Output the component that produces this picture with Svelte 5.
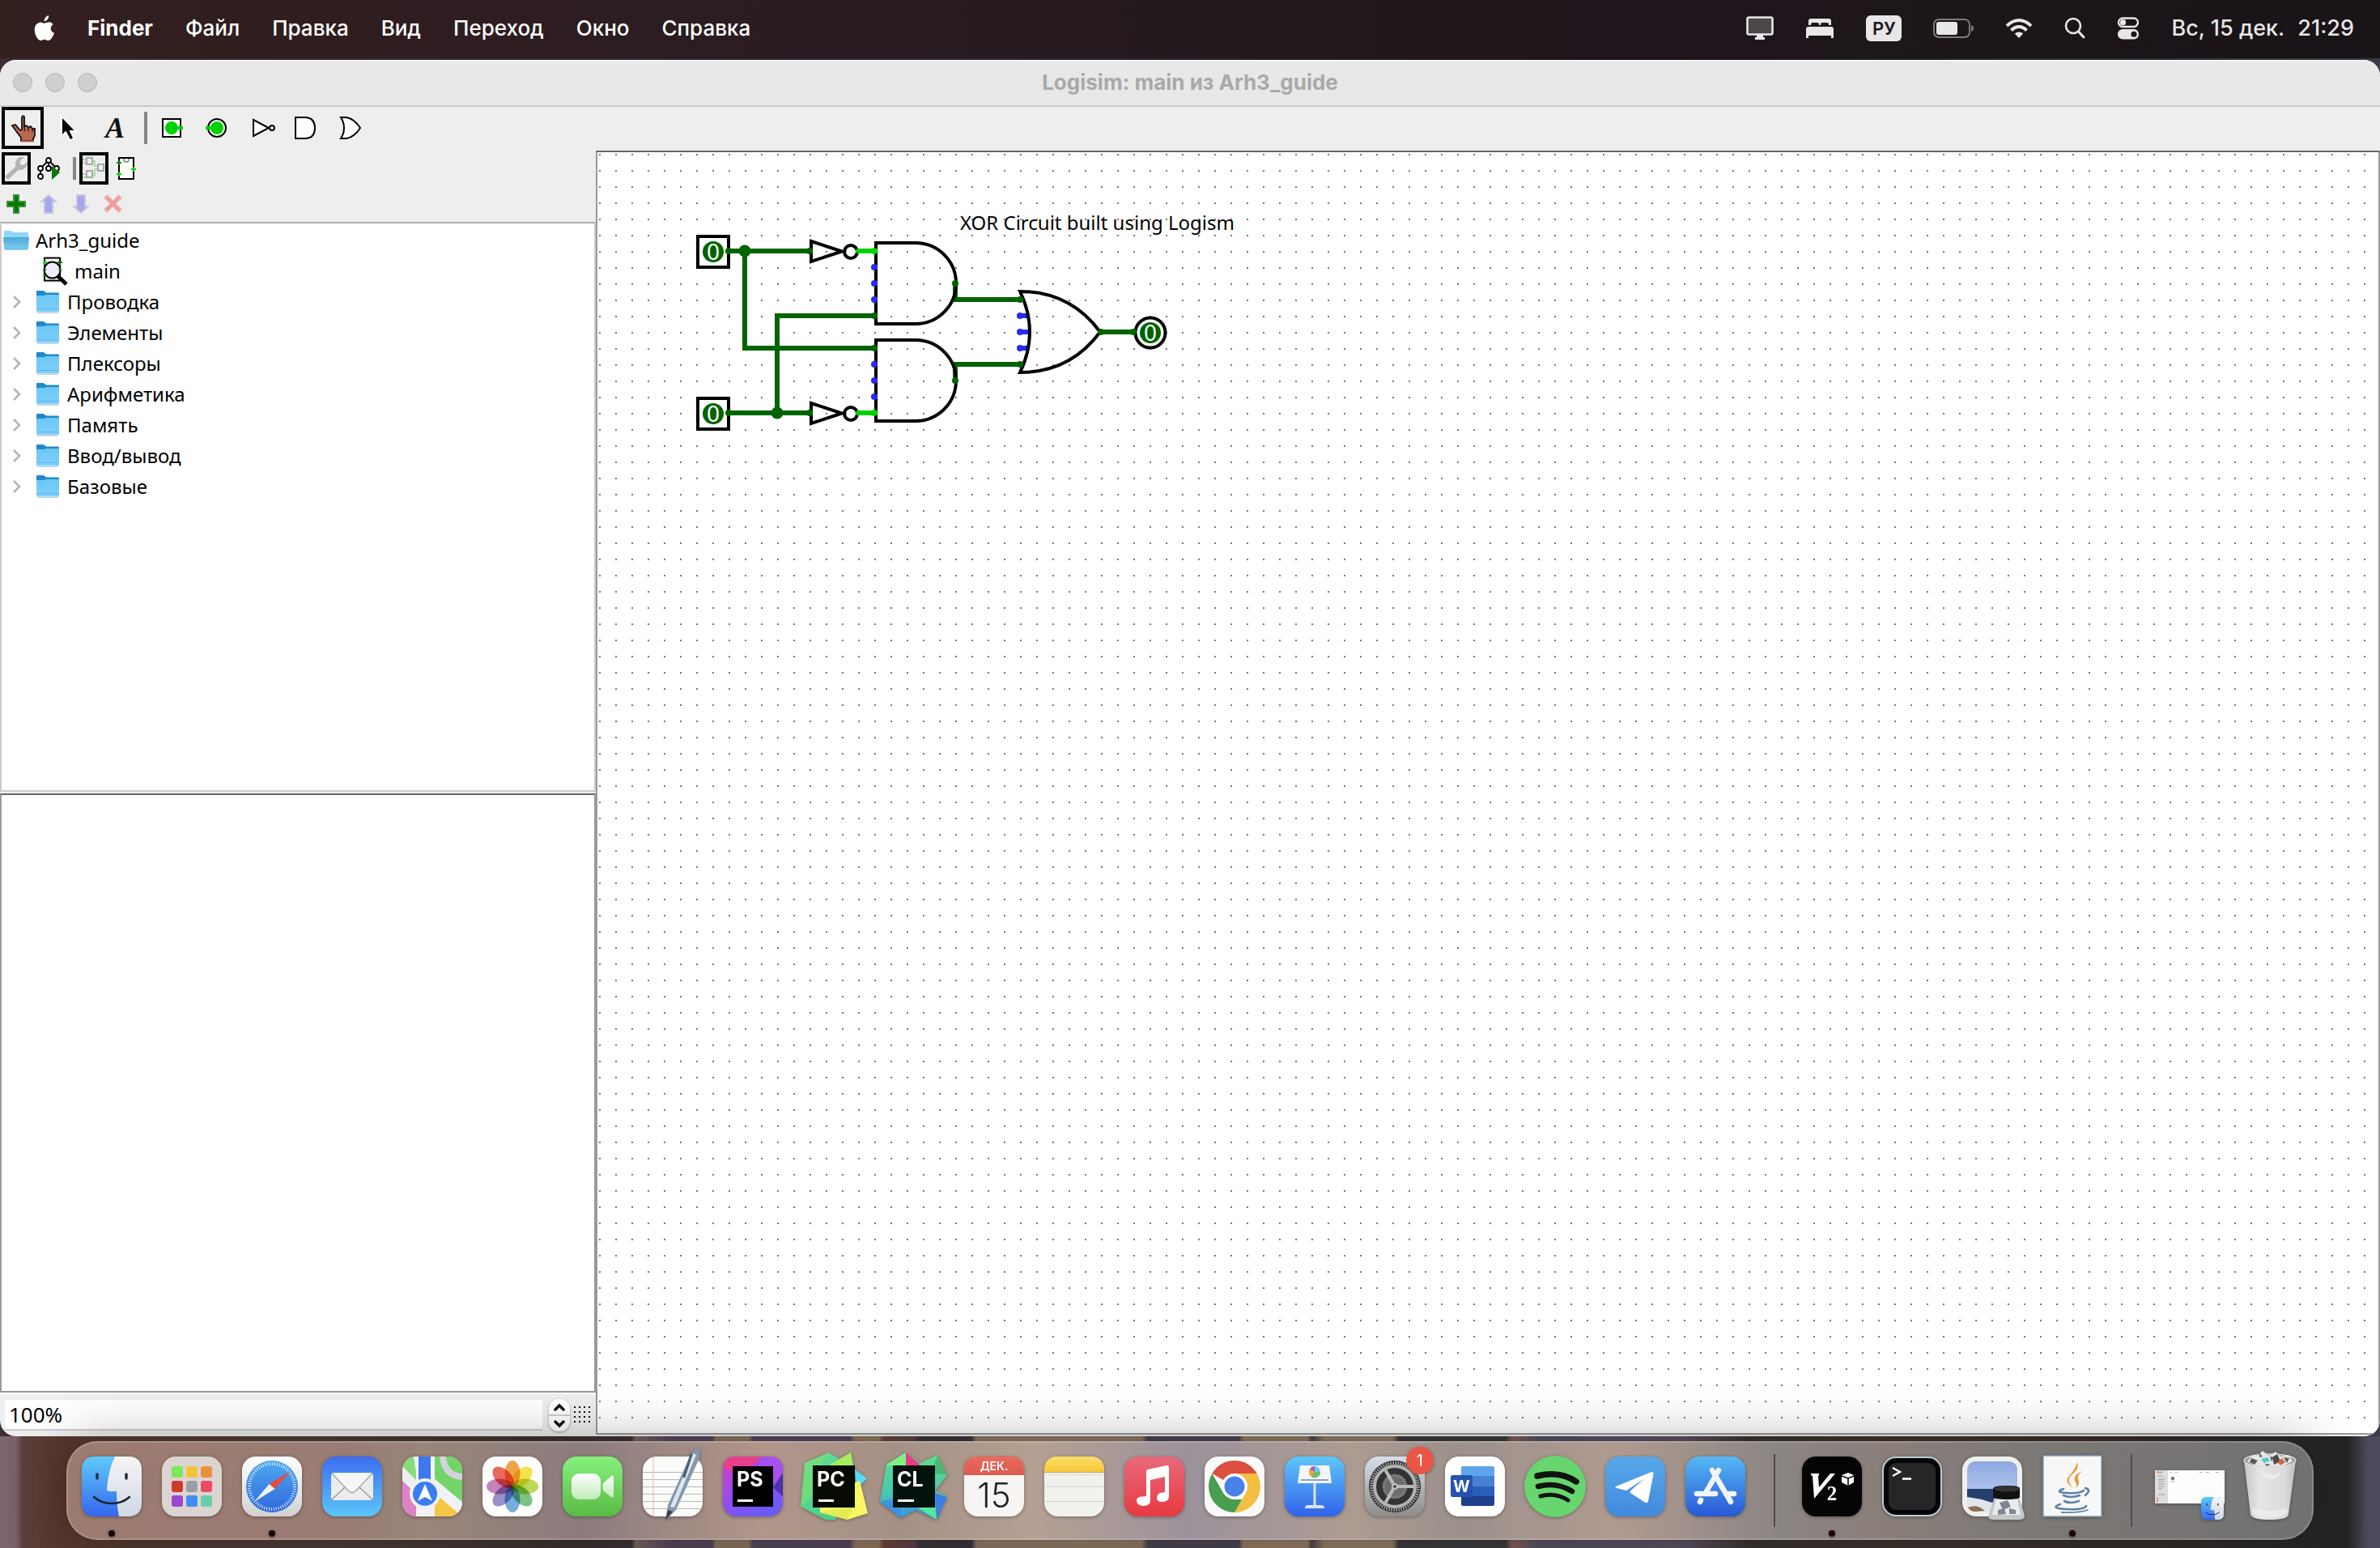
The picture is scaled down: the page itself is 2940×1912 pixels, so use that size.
<script>
  const menus = ['Файл', 'Правка', 'Вид', 'Переход', 'Окно', 'Справка'];
  const libraries = ['Проводка', 'Элементы', 'Плексоры', 'Арифметика', 'Память', 'Ввод/вывод', 'Базовые'];
  const petals = ['#f29a38', '#f4e03a', '#b9d546', '#6fbd7a', '#6aa5dc', '#8d84c4', '#c274b4', '#ea5a4c'];
  const pads = ['#7be85c', '#f5c23c', '#e8913a', '#d23a2c', '#98a0a4', '#ec4a62', '#9a48cf', '#3f8cf4', '#66cfa8'];
  const gates = [300, 420];
  const inputs = [310, 510];
  let zoom = $state('100%');
</script>

{#snippet finderFace()}
  <path d="M17 0H57Q74 0 74 17V57Q74 74 57 74H17Q0 74 0 57V17Q0 0 17 0Z" fill="url(#finder-blue)" />
  <path d="M41 0H57Q74 0 74 17V57Q74 74 57 74H46Q43 60 43 43H34Q31 43 31 40Q33 16 41 0Z" fill="url(#finder-white)" />
  <path d="M19 22V27M55 22V27" stroke="#23303c" stroke-width="3.5" stroke-linecap="round" />
  <path d="M15 50Q24 58 37 58T59 50" fill="none" stroke="#1c2430" stroke-width="2.6" stroke-linecap="round" />
{/snippet}

<div class="screen">
  <svg class="defs" aria-hidden="true">
    <defs>
      <linearGradient id="finder-blue" x2="0" y2="1"><stop stop-color="#5ecbf9" /><stop offset="1" stop-color="#3567ee" /></linearGradient>
      <linearGradient id="finder-white" x2="0" y2="1"><stop stop-color="#f6f4f4" /><stop offset="1" stop-color="#cfd9e4" /></linearGradient>
      <linearGradient id="white-grey" x2="0" y2="1"><stop stop-color="#ffffff" /><stop offset="1" stop-color="#d2d2d2" /></linearGradient>
      <linearGradient id="mail" x2="0" y2="1"><stop stop-color="#3b6df0" /><stop offset="1" stop-color="#5cc6fa" /></linearGradient>
      <linearGradient id="sky" x2="0" y2="1"><stop stop-color="#5fc6fa" /><stop offset="1" stop-color="#3263ea" /></linearGradient>
      <linearGradient id="safari" x2="0" y2="1"><stop stop-color="#4fa9f0" /><stop offset="1" stop-color="#2f68dc" /></linearGradient>
      <linearGradient id="green" x2="0" y2="1"><stop stop-color="#86f07c" /><stop offset="1" stop-color="#59bb45" /></linearGradient>
      <linearGradient id="ps" x2=".6" y2="1"><stop stop-color="#d83ab8" /><stop offset=".5" stop-color="#9a4cf0" /><stop offset="1" stop-color="#6a5af6" /></linearGradient>
      <linearGradient id="pc" x2=".5" y2="1"><stop stop-color="#62dc9a" /><stop offset="1" stop-color="#4ccf8c" /></linearGradient>
      <linearGradient id="cl" x2="0" y2="1"><stop stop-color="#5fe08a" /><stop offset=".6" stop-color="#48c8b0" /><stop offset="1" stop-color="#3c8ce0" /></linearGradient>
      <linearGradient id="cal" x2="0" y2="1"><stop stop-color="#ec6a5e" /><stop offset="1" stop-color="#d95a4e" /></linearGradient>
      <linearGradient id="note" x2="0" y2="1"><stop stop-color="#fbdc6a" /><stop offset="1" stop-color="#f6c836" /></linearGradient>
      <linearGradient id="music" x2="0" y2="1"><stop stop-color="#ea6a7c" /><stop offset="1" stop-color="#e63a40" /></linearGradient>
      <linearGradient id="gear" x2="0" y2="1"><stop stop-color="#d6e0e8" /><stop offset="1" stop-color="#8e8c88" /></linearGradient>
      <linearGradient id="tg" x2="0" y2="1"><stop stop-color="#58a8ea" /><stop offset="1" stop-color="#428adc" /></linearGradient>
      <linearGradient id="store" x2="0" y2="1"><stop stop-color="#56b8f4" /><stop offset="1" stop-color="#2858d6" /></linearGradient>
      <linearGradient id="cam" x2="0" y2="1"><stop stop-color="#ffffff" /><stop offset="1" stop-color="#c2eab8" /></linearGradient>
      <linearGradient id="photo" x2="0" y2="1"><stop stop-color="#8ea8e0" /><stop offset="1" stop-color="#c6d8f6" /></linearGradient>
      <linearGradient id="bin"><stop stop-color="#c6c6c6" /><stop offset=".3" stop-color="#e6e6e6" /><stop offset=".8" stop-color="#dcdada" /><stop offset="1" stop-color="#bdbdbd" /></linearGradient>
      <linearGradient id="folder" x2="0" y2="1"><stop stop-color="#6cc6f4" /><stop offset="1" stop-color="#80d0fc" /></linearGradient>
      <linearGradient id="folder-open" x2="0" y2="1"><stop stop-color="#4fa8d4" /><stop offset="1" stop-color="#82cff4" /></linearGradient>
      <clipPath id="tile"><rect width="74" height="74" rx="17" /></clipPath>
    </defs>
  </svg>

  <header class="menubar">
    <nav class="menus" aria-label="Меню">
      <button class="apple" aria-label="Apple">
        <svg width="26" height="32" viewBox="0 0 26 32"><path d="M18.2 0Q18.5 3 16.5 5.200T12.600 7.300Q12.300 4.600 14.200 2.500T18.200 0ZM23.600 10.900Q20.700 12.800 20.700 16Q20.700 20 25 21.700Q24 25 21.700 28.200T17.800 31Q16.700 31 15.400 30.400T13 29.800Q11.800 29.800 10.500 30.400T8.200 31Q6 31 3.400 27.200T.7 18.400Q.7 13.400 3 11T7.800 8.500Q9.300 8.500 10.900 9.200T13 9.900Q13.600 9.900 15.400 9.100T18.800 8.300Q21.900 8.500 23.600 10.900Z" fill="#fff" /></svg>
      </button>
      <button class="app">Finder</button>
      {#each menus as menu}<button>{menu}</button>{/each}
    </nav>
    <div class="status">
      <button aria-label="Экран"><svg width="34" height="30" viewBox="0 0 34 30"><rect x="1.500" y="1.500" width="31" height="21" rx="2" fill="#4d474c" stroke="#e8e6e7" stroke-width="2.600" /><path d="M13 23H21V26H23V29H11V26H13Z" fill="#e8e6e7" /></svg></button>
      <button aria-label="Сон"><svg width="36" height="26" viewBox="0 0 36 26"><path d="M4 9V4Q4 1 7 1H29Q32 1 32 4V9H29V8Q29 6 27 6H21Q19 6 19 8V9H17V8Q17 6 15 6H9Q7 6 7 8V9ZM1 25V14Q1 11 4 11H32Q35 11 35 14V25H32V22H4V25Z" fill="#e8e6e7" /></svg></button>
      <button class="lang">РУ</button>
      <button aria-label="Батарея"><svg width="50" height="26" viewBox="0 0 50 26"><rect x="1" y="2" width="44" height="22" rx="6" fill="none" stroke="#7f7a7e" stroke-width="2" /><rect x="4" y="5" width="26" height="16" rx="3" fill="#e8e6e7" /><path d="M47 9Q50 10 50 13T47 17Z" fill="#7f7a7e" /></svg></button>
      <button aria-label="Wi-Fi"><svg width="34" height="26" viewBox="0 0 34 26"><g fill="none" stroke="#e8e6e7" stroke-width="4"><path d="M2 10Q9 3 17 3T32 10" /><path d="M7.500 15.500Q12 11 17 11T26.500 15.500" /></g><path d="M17 25L11.800 19.500Q14 17.500 17 17.500T22.200 19.500Z" fill="#e8e6e7" /></svg></button>
      <button aria-label="Поиск"><svg width="26" height="28" viewBox="0 0 26 28"><circle cx="11" cy="11" r="9" fill="none" stroke="#e8e6e7" stroke-width="2.600" /><path d="M17.500 18L24 25" stroke="#e8e6e7" stroke-width="3" stroke-linecap="round" /></svg></button>
      <button aria-label="Пункт управления"><svg width="28" height="28" viewBox="0 0 28 28"><rect x="2" y="1.500" width="24" height="10.500" rx="5.250" fill="none" stroke="#e8e6e7" stroke-width="2.400" /><circle cx="7.500" cy="6.700" r="3.600" fill="#e8e6e7" /><rect x="1" y="15" width="26" height="12.500" rx="6.250" fill="#e8e6e7" /><circle cx="21" cy="21.250" r="3.600" fill="#1b1519" /></svg></button>
      <button class="clock"><span>Вс, 15 дек.</span><span>21:29</span></button>
    </div>
  </header>

  <main class="window">
    <div class="titlebar">
      <div class="lights">
        <button aria-label="Закрыть"></button><button aria-label="Свернуть"></button><button aria-label="Развернуть"></button>
      </div>
      <h1>Logisim: main из Arh3_guide</h1>
      <div class="lights-space"></div>
    </div>

    <div class="toolbar">
      <button class="tool on" aria-label="Нажатие">
        <svg width="40" height="40" viewBox="0 0 20 20"><path d="M9.500 3.500Q10 2 11 3V9L12 8.500L13.500 9.500L15 9L16 10.500L17.500 10.500V14.500L16.500 17V18H9V16L6 12L3.500 8.500L5.500 8L8.500 11.500L9.500 11Z" fill="#b76a50" stroke="#111" stroke-width=".9" /><path d="M13.500 9.500V12M16 10.500V12.500M11.200 9V12" stroke="#3a1c14" stroke-width=".8" /><path d="M9 18.300H17" stroke="#b76a50" stroke-width="1" /></svg>
      </button>
      <button class="tool" aria-label="Выбор">
        <svg width="40" height="40" viewBox="0 0 20 20"><path d="M6 3V15L8.500 12.500L11 17.500L13.500 16.500L11.500 12H14.500Z" fill="#000" stroke="#fff" stroke-width="1.400" /><path d="M6.500 4V14L8.700 11.700L11.500 17L13 16.300L10.700 11.500H13.800Z" fill="#000" /></svg>
      </button>
      <button class="tool" aria-label="Текст">
        <svg width="40" height="40" viewBox="0 0 20 20"><text x="5" y="16" class="serif">A</text></svg>
      </button>
      <span class="sep"></span>
      <button class="tool" aria-label="Входной контакт">
        <svg width="40" height="40" viewBox="0 0 20 20"><rect x="4.500" y="4.500" width="11" height="11" fill="#fff" stroke="#000" /><circle cx="10" cy="10" r="4" fill="#00d200" /><path d="M14 10H17" stroke="#00d200" stroke-width="2" /></svg>
      </button>
      <button class="tool" aria-label="Выходной контакт">
        <svg width="40" height="40" viewBox="0 0 20 20"><circle cx="10" cy="10" r="5.500" fill="#fff" stroke="#000" /><circle cx="10" cy="10" r="4" fill="#00d200" /><path d="M3 10H6" stroke="#00d200" stroke-width="2" /></svg>
      </button>
      <button class="tool" aria-label="НЕ">
        <svg width="40" height="40" viewBox="0 0 20 20"><path d="M4.500 5L14 10L4.500 15Z" fill="#fff" stroke="#000" /><circle cx="16" cy="10" r="1.500" fill="#ddd" stroke="#000" stroke-width=".9" /></svg>
      </button>
      <button class="tool" aria-label="И">
        <svg width="40" height="40" viewBox="0 0 20 20"><path d="M2.500 3.500H9Q14.500 4 14.500 10T9 16.500H2.500Z" fill="#fff" stroke="#000" /></svg>
      </button>
      <button class="tool" aria-label="ИЛИ">
        <svg width="40" height="40" viewBox="0 0 20 20"><path d="M2.500 3.500H6Q11 4.500 14.500 10Q11 15.500 6 16.500H2.500Q4.500 13.500 4.500 10T2.500 3.500Z" fill="#fff" stroke="#000" /></svg>
      </button>
    </div>

    <div class="body">
      <aside class="side">
        <div class="tools">
          <button class="mini on" aria-label="Инструменты"><svg width="28" height="28" viewBox="0 0 14 14"><path d="M1 13L8 6.500" stroke="#b4b4b4" stroke-width="2.600" /><path d="M12 0H9Q6.500 1.500 6.500 4.500Q6.500 8 9.500 8Q13 8 14 4V3L11.500 5L9.500 4.500V2.500Z" fill="#b4b4b4" /></svg></button>
          <button class="mini" aria-label="Моделирование"><svg width="28" height="28" viewBox="0 0 14 14"><g fill="#fff" stroke="#000" stroke-width=".9"><path d="M7 2L2 7V12M7 2V7M7 2L12 7" /><circle cx="7" cy="2" r="1.500" /><circle cx="2" cy="7" r="1.500" /><circle cx="7" cy="7" r="1.500" /><circle cx="12" cy="7" r="1.500" /><circle cx="2" cy="12" r="1.500" /></g><path d="M9 5.500L14 9.500L9 14Z" fill="#0a7a0a" /></svg></button>
          <span class="sep small"></span>
          <button class="mini on" aria-label="Схема"><svg width="28" height="28" viewBox="0 0 14 14"><g fill="none"><path d="M0 1.500H2.500M0 3.500H2.500M0 10.500H2.500M0 12.500H2.500M6 2.500H7.500V5.500H9.500M6 11.500H7.500V7.500H9.500M13 6.500H14" stroke="#9fe09f" stroke-width=".9" /><g stroke="#a8a8a8"><rect x="2.500" y=".5" width="3.500" height="4" /><rect x="9.500" y="4.500" width="3.500" height="4" /><rect x="2.500" y="8.500" width="3.500" height="4" /></g></g></svg></button>
          <button class="mini" aria-label="Внешний вид"><svg width="28" height="28" viewBox="0 0 14 14"><rect x="2.500" y=".5" width="9" height="13" fill="#fff" stroke="#000" /><path d="M5.500 1V2Q5.500 3 7 3T8.500 2V1" fill="none" stroke="#999" /><path d="M1 3.500H4M2.500 2.300V4.700" stroke="#0a7a0a" /><path d="M1 10.500H4M2.500 9.300V11.700M10 7.500H13M11.500 6.300V8.700" stroke="#00d200" /></svg></button>
        </div>
        <div class="tools actions">
          <button class="mini" aria-label="Добавить"><svg width="24" height="24" viewBox="0 0 12 12"><path d="M4.500 .5H7.500V4.500H11.500V7.500H7.500V11.500H4.500V7.500H.5V4.500H4.500Z" fill="#007a00" stroke="#3f8f3f" /></svg></button>
          <button class="mini" aria-label="Вверх"><svg width="24" height="24" viewBox="0 0 12 12"><path d="M6 .5L10.300 4.500H8.500V11.500H3.500V4.500H1.700Z" fill="#a6a6ec" stroke="#c6c6de" /></svg></button>
          <button class="mini" aria-label="Вниз"><svg width="24" height="24" viewBox="0 0 12 12"><path d="M6 11.500L10.300 7.500H8.500V.5H3.500V7.500H1.700Z" fill="#a6a6ec" stroke="#c6c6de" /></svg></button>
          <button class="mini" aria-label="Удалить"><svg width="24" height="24" viewBox="0 0 12 12"><path d="M1 1L10.500 10.500M10.500 1L1 10.500" stroke="#ecccce" stroke-width="3.400" /><path d="M1.500 1.500L10 10M10 1.500L1.500 10" stroke="#ee9c9e" stroke-width="2.200" /></svg></button>
        </div>
        <ul class="tree">
          <li>
            <button class="node root">
              <svg width="32" height="26" viewBox="0 0 32 26"><path d="M1 9V2Q1 1 2 1H9Q11 1 12 3H30Q31 3 31 4V9Z" fill="#8fd6f8" /><path d="M0 9H32L31 23Q31 25 29 25H3Q1 25 1 23Z" fill="url(#folder-open)" /><path d="M1 22.500H31" stroke="#6ab8e0" stroke-width="1" /></svg>
              <span>Arh3_guide</span>
            </button>
          </li>
          <li>
            <button class="node circuit">
              <svg width="34" height="36" viewBox="0 0 17 18"><rect x="2" y=".8" width="9.500" height="14" fill="#fff" stroke="#000" /><path d="M1 3.500H3.500M2.200 2.500V5M1 11.500H3.500" stroke="#00d200" /><path d="M10 3.500H13M11.500 2.500V5" stroke="#006400" /><circle cx="6.800" cy="8.300" r="5" fill="#eeeefb" stroke="#000" /><path d="M2 8H3.200M10.500 8H12.500" stroke="#00b000" stroke-width=".8" /><path d="M10.200 12L15.500 17" stroke="#000" stroke-width="2.400" /></svg>
              <span>main</span>
            </button>
          </li>
          {#each libraries as library}
            <li>
              <button class="node library">
                <svg width="12" height="18" viewBox="0 0 12 18"><path d="M2 2L9 9L2 16" fill="none" stroke="#b5b5b5" stroke-width="2.600" /></svg>
                <svg width="30" height="30" viewBox="0 0 30 30"><path d="M1 26V2Q1 1 2 1H9Q11 1 13 3.500H28Q29 3.500 29 5V26Z" fill="#2089cc" /><path d="M1 26V8Q1 7 3 7H11L13 6H29V26Q29 27.500 27.500 27.500H2.500Q1 27.500 1 26Z" fill="url(#folder)" /><path d="M1 23.500H29" stroke="#5fb4e6" /><path d="M2 28.500H28" stroke="#000" stroke-opacity=".2" /></svg>
                <span>{library}</span>
              </button>
            </li>
          {/each}
        </ul>
        <section class="properties" aria-label="Свойства"></section>
        <div class="zoombar">
          <input aria-label="Масштаб" bind:value={zoom} />
          <div class="spinner">
            <button aria-label="Увеличить"><svg width="14" height="10" viewBox="0 0 14 10"><path d="M2 8L7 3L12 8" fill="none" stroke="#111" stroke-width="3.500" stroke-linecap="round" /></svg></button>
            <button aria-label="Уменьшить"><svg width="14" height="10" viewBox="0 0 14 10"><path d="M2 2L7 7L12 2" fill="none" stroke="#111" stroke-width="3.500" stroke-linecap="round" /></svg></button>
          </div>
          <button class="grip" aria-label="Сетка"></button>
        </div>
      </aside>

      <section class="canvas" aria-label="Схема main">
        <svg width="900" height="400" viewBox="738 188 900 400">
          <text x="1186" y="284" class="label">XOR Circuit built using Logism</text>
          <g fill="none" stroke="#006400" stroke-width="6">
            <path d="M900 310H1000M920 310V430H1080M900 510H1000M960 510V390H1080" />
            <path d="M1180 350V370H1262M1180 470V450H1262M1360 410H1400" />
          </g>
          <path d="M1260 390H1269M1260 410H1271M1260 430H1269" stroke="#2828ff" stroke-width="6" />
          {#each inputs as y}
            <rect x="862" y={y - 18} width="38" height="38" fill="#fff" stroke="#000" stroke-width="4" />
            <circle cx="881" cy={y + 1} r="13" fill="#006400" />
            <text x="881" y={y + 11} class="bit">0</text>
            <path d="M1002 {y - 12}L1040 {y + .5}L1002 {y + 13}Z" fill="none" stroke="#000" stroke-width="4" />
            <circle cx="1051" cy={y + 1} r="8" fill="none" stroke="#000" stroke-width="4" />
            <path d="M1060 {y}H1080" stroke="#00d200" stroke-width="6" stroke-linecap="round" />
            <g fill="#006400"><circle cx="900" cy={y} r="4" /><circle cx="1000" cy={y} r="4" /></g>
          {/each}
          {#each gates as y}
            <path d="M1131 {y}H1082V{y + 100}H1131A50 50 0 0 0 1131 {y}Z" fill="none" stroke="#000" stroke-width="4" />
            <circle cx="1180" cy={y + 50} r="4" fill="#006400" />
            <g fill="#2828ff"><circle cx="1080" cy={y + 30} r="4" /><circle cx="1080" cy={y + 50} r="4" /><circle cx="1080" cy={y + 70} r="4" /></g>
          {/each}
          <path d="M1260 360Q1322 360 1359 410Q1322 460 1260 460Q1284 410 1260 360Z" fill="none" stroke="#000" stroke-width="4" />
          <g fill="#00d200"><circle cx="1080" cy="310" r="4" /><circle cx="1080" cy="510" r="4" /></g>
          <g fill="#006400">
            <circle cx="920" cy="310" r="7.500" /><circle cx="960" cy="510" r="7.500" />
            <circle cx="1080" cy="390" r="4" /><circle cx="1080" cy="430" r="4" />
            <circle cx="1260" cy="370" r="4" /><circle cx="1260" cy="450" r="4" />
          </g>
          <g fill="#2828ff"><circle cx="1260" cy="390" r="4" /><circle cx="1260" cy="410" r="4" /><circle cx="1260" cy="430" r="4" /></g>
          <circle cx="1421" cy="411" r="18.500" fill="#fff" stroke="#000" stroke-width="4" />
          <circle cx="1421" cy="411" r="13" fill="#006400" />
          <text x="1421" y="421" class="bit">0</text>
          <g fill="#006400"><circle cx="1360" cy="410" r="4" /><circle cx="1400" cy="410" r="4" /></g>
        </svg>
      </section>
    </div>
  </main>

  <footer class="desk">
    <nav class="dock" aria-label="Dock">
      <div class="apps grow">
        <button class="open" aria-label="Finder"><svg viewBox="0 0 74 74">{@render finderFace()}</svg></button>
        <button aria-label="Launchpad"><svg viewBox="0 0 74 74"><rect width="74" height="74" rx="17" fill="#dcd4d1" />{#each pads as pad, i}<rect x={12 + (i % 3) * 18} y={12 + Math.floor(i / 3) * 18} width="14" height="14" rx="3" fill={pad} />{/each}</svg></button>
        <button class="open" aria-label="Safari"><svg viewBox="0 0 74 74"><rect width="74" height="74" rx="17" fill="url(#white-grey)" /><circle cx="37" cy="37" r="32" fill="url(#safari)" /><circle cx="37" cy="37" r="28" fill="none" stroke="#fff" stroke-opacity=".85" stroke-width="4" stroke-dasharray="1 1.930" /><path d="M60 18L40.500 40L33.500 34Z" fill="#e8483c" /><path d="M15 56L40.500 40L33.500 34Z" fill="#f2f2f2" /></svg></button>
        <button aria-label="Почта"><svg viewBox="0 0 74 74"><rect width="74" height="74" rx="17" fill="url(#mail)" /><rect x="11" y="20" width="52" height="34" rx="4" fill="#ececec" /><path d="M12 53L28 38M62 53L46 38" stroke="#9a9a9a" stroke-width="1.400" /><path d="M12 21L32 42Q37 47 42 42L62 21" fill="#f6f6f6" stroke="#a8a8a8" stroke-width="1.400" /></svg></button>
        <button aria-label="Карты"><svg viewBox="0 0 74 74"><g clip-path="url(#tile)"><rect width="74" height="74" fill="#eceef0" /><path d="M0 0H17V29L0 12Z" fill="#86de78" /><path d="M39 0H74V56L39 27Z" fill="#74d468" /><path d="M0 30L17 46V74H0Z" fill="#df82c8" /><path d="M40 44L74 74H40Z" fill="#f4c843" /><path d="M50 0Q52 24 74 25" fill="none" stroke="#d2d3dc" stroke-width="8" /><path d="M14 0H40V28L74 58V74L40 45V74H17V20Z" fill="#f1f2f5" /><path d="M20 0H35V34H20Z" fill="#3b78ee" /></g><circle cx="28" cy="46" r="17" fill="#3a7cf2" stroke="#eef0f4" stroke-width="4" /><path d="M28 34L37 55L28 50L19 55Z" fill="#fff" /></svg></button>
        <button aria-label="Фото"><svg viewBox="0 0 74 74"><rect width="74" height="74" rx="17" fill="#fdfdfd" />{#each petals as petal, i}<ellipse class="petal" cx="37" cy="21" rx="9.500" ry="16" fill={petal} transform="rotate({i * 45} 37 37)" />{/each}</svg></button>
        <button aria-label="FaceTime"><svg viewBox="0 0 74 74"><rect width="74" height="74" rx="17" fill="url(#green)" /><rect x="11" y="21" width="36" height="32" rx="9" fill="url(#cam)" /><path d="M50 33L60 24Q63 22 63 26V48Q63 52 60 50L50 42Q49 37 50 33Z" fill="url(#cam)" /></svg></button>
        <button aria-label="TextEdit"><svg viewBox="0 0 74 74"><rect width="74" height="74" rx="17" fill="#fbfbfa" /><path d="M0 19.500H74M0 28.500H74M0 37.500H74M0 46.500H74M0 55.500H74M1 64.500H73" stroke="#b8b8b8" /><path d="M13 1V73" stroke="#f0b4ac" /><path d="M28 79L31 60L60 -4L66 -10L71 -8L70 2L41 66Z" fill="#8497aa" /><path d="M34 62L62 -4L66 -2L39 63Z" fill="#dbe6f0" /><path d="M49 25L59 -4L62 -3L52 27Z" fill="#4f6274" /><path d="M28 79L31 66L37 68Z" fill="#3c3c3e" /></svg></button>
        <button aria-label="PhpStorm"><svg viewBox="0 0 74 74"><rect width="74" height="74" rx="17" fill="url(#ps)" /><path d="M17 0H47L24 22L0 13Q2 0 17 0Z" fill="#e83f8c" /><path d="M47 0H57Q74 0 74 17V56L62 30L44 12Z" fill="#a850ee" /><path d="M74 20V50L62 38Z" fill="#4a34a8" /><rect x="12" y="12" width="50" height="50" /><text x="17" y="37" class="jb">PS</text><rect x="18" y="53" width="19" height="3" fill="#fff" /></svg></button>
        <button aria-label="PyCharm"><svg viewBox="0 0 74 74"><path d="M2 8L32 -5L46 4L59 -5L64 22L40 78L28 78L-3 62Z" fill="url(#pc)" /><path d="M2 8L32 -5L22 12L10 50L-3 62Z" fill="#7ee070" fill-opacity=".6" /><path d="M59 -5L64 22L30 12Z" fill="#a9ec60" /><path d="M64 16L79 27L66 40Z" fill="#56dcf8" /><path d="M70 30L80 70L55 78L21 69V50Z" fill="#f7f764" /><path d="M21 69L55 78L62 62Z" fill="#e4ec54" /><rect x="12" y="11" width="52" height="52" fill="#060a02" /><text x="17" y="37" class="jb">PC</text><rect x="19" y="53" width="19" height="3" fill="#fff" /></svg></button>
        <button aria-label="CLion"><svg viewBox="0 0 74 74"><path d="M4 10L28 -5L46 8L67 -2L79 23L64 42L79 50L66 78L40 66L22 76L-4 56Z" fill="url(#cl)" /><path d="M28 -5L46 10L28 14Z" fill="#e83a86" /><path d="M4 10L28 -5V14Z" fill="#7cf286" /><path d="M67 -2L79 23L60 20Z" fill="#4cb874" /><path d="M64 45L79 50L66 78Z" fill="#3a80e4" /><path d="M-4 56L20 50L22 76Z" fill="#3a92e0" /><path d="M38 60L66 78L64 60Z" fill="#56e89c" /><rect x="12" y="11" width="52" height="52" fill="#04120c" /><text x="17" y="37" class="jb">CL</text><rect x="18" y="53" width="20" height="3" fill="#fff" /></svg></button>
        <button aria-label="Календарь"><svg viewBox="0 0 74 74"><rect width="74" height="74" rx="17" fill="#f6f5f4" /><path d="M0 23V17Q0 0 17 0H57Q74 0 74 17V23Z" fill="url(#cal)" /><text x="37" y="17" class="month">ДЕК.</text><text x="37" y="63" class="day">15</text></svg></button>
        <button aria-label="Заметки"><svg viewBox="0 0 74 74"><rect width="74" height="74" rx="17" fill="#f1f1ee" /><path d="M0 19V17Q0 0 17 0H57Q74 0 74 17V19Z" fill="url(#note)" /><path d="M0 19.500H74" stroke="#b9a878" /><path d="M2 22.500H72" stroke="#aaa" stroke-dasharray="1 2" /><path d="M0 37H74M0 55.500H74" stroke="#d0d0ce" /></svg></button>
        <button aria-label="Музыка"><svg viewBox="0 0 74 74"><rect width="74" height="74" rx="17" fill="url(#music)" /><path d="M27 18Q27 16 29 16L52 11Q55 11 55 14V49Q55 56 47 56T40 50T50 44V25L32 29V54Q32 61 24 61T15 55T27 49Z" fill="#fff" /></svg></button>
        <button aria-label="Chrome"><svg viewBox="0 0 74 74"><rect width="74" height="74" rx="17" fill="#fafafa" /><path d="M37 37L9.300 21A32 32 0 0 1 64.700 21Z" fill="#dc4f40" /><path d="M37 21H64.700A32 32 0 0 1 37 69L50.800 45Z" fill="#f3be42" /><path d="M9.300 21L23.200 45L37 53H46.200L37 69A32 32 0 0 1 9.300 21Z" fill="#4a9c4e" /><circle cx="37" cy="37" r="16" fill="#fff" /><circle cx="37" cy="37" r="12.500" fill="#4a80ea" /></svg></button>
        <button aria-label="Keynote"><svg viewBox="0 0 74 74"><rect width="74" height="74" rx="17" fill="url(#sky)" /><path d="M19 11H55L58 33H16Z" fill="#f3f5f8" /><path d="M20 29H54" stroke="#8ea4bc" stroke-width="2" /><circle cx="37" cy="19" r="7" fill="#6cc8f2" /><path d="M37 19V12A7 7 0 0 0 31 16Z" fill="#a85cc0" /><path d="M37 19L31 15.500A7 7 0 0 0 33 25Z" fill="#f0a040" /><path d="M37 19L33 25A7 7 0 0 0 44 19Z" fill="#6cc060" /><path d="M37 33V60" stroke="#dde4ee" stroke-width="3" /><path d="M25 64Q25 60 29 60H45Q49 60 49 64Z" fill="#dbe2ea" /></svg></button>
        <button aria-label="Системные настройки"><svg viewBox="0 0 74 74"><rect width="74" height="74" rx="17" fill="url(#gear)" /><circle cx="37" cy="37" r="32" fill="#252525" /><circle cx="37" cy="37" r="29" fill="none" stroke="#a6a6a6" stroke-width="4" stroke-dasharray="1.600 1.440" /><circle cx="37" cy="37" r="25" fill="#333" stroke="#b2b4b4" stroke-width="4" /><circle cx="37" cy="37" r="14" fill="#6c6e6e" stroke="#8c8e8e" stroke-width="3" stroke-dasharray="1.600 1" /><path d="M37 37H60M37 37L25.500 17M37 37L25.500 57" stroke="#babcbc" stroke-width="4" /><circle cx="37" cy="37" r="4" fill="#babcbc" /><circle cx="37" cy="37" r="1.600" fill="#222" /></svg><span class="badge">1</span></button>
        <button aria-label="Word"><svg viewBox="0 0 74 74"><rect width="74" height="74" rx="17" fill="#fff" /><path d="M20 24V14Q20 12 22 12H59Q61 12 61 14V24Z" fill="#5fa5ea" /><path d="M20 24H61V37H20Z" fill="#4880d4" /><path d="M20 37H61V49H20Z" fill="#2c5cbc" /><path d="M20 49H61V59Q61 61 59 61H22Q20 61 20 59Z" fill="#1f3f8c" /><rect x="7" y="23" width="27" height="27" rx="2.500" fill="#2552b0" /><text x="20.500" y="44" class="word">W</text></svg></button>
        <button aria-label="Spotify"><svg viewBox="0 0 74 74"><circle cx="37" cy="37" r="38" fill="#67d66f" /><g fill="none" stroke="#101410" stroke-linecap="round"><path d="M15 24Q43 17 63 31" stroke-width="7.500" /><path d="M16 37Q39 31 58 43" stroke-width="6.500" /><path d="M19 49Q37 44 53 54" stroke-width="5" /></g></svg></button>
        <button aria-label="Telegram"><svg viewBox="0 0 74 74"><rect width="74" height="74" rx="17" fill="url(#tg)" /><path d="M13 37L56 19.500Q60 18 59.500 22L53 55Q52 59 48 56L31 45Q30 43.500 32 41.500L49 27L26 42L14 39Q11 38 13 37Z" fill="#fff" /></svg></button>
        <button aria-label="App Store"><svg viewBox="0 0 74 74"><rect width="74" height="74" rx="17" fill="url(#store)" /><g stroke="#f2f4fa" stroke-width="6.500" stroke-linecap="round"><path d="M41 17L26 43M33 17L56 56M14 46H37M50 46H60M19 54L18 56" /></g></svg></button>
      </div>
      <span class="rule"></span>
      <div class="apps">
        <button class="open" aria-label="V2"><svg viewBox="0 0 74 74"><rect width="74" height="74" rx="17" fill="#050505" /><path d="M11 21H21V23L20 24L21 38L35 21H41L15 52L13 24L11 23Z" fill="#fff" /><text x="37" y="54" class="two">2</text><path d="M57 20L64 23V32L57 36L49 32V23Z" fill="#fff" /><path d="M49 24L57 27L64 24M57 27V36" fill="none" stroke="#050505" stroke-width="1.600" /></svg></button>
        <button aria-label="Терминал"><svg viewBox="0 0 74 74"><rect width="74" height="74" rx="17" fill="#bccdd3" /><rect x="2" y="2" width="70" height="70" rx="15" fill="#050505" /><rect x="8" y="8" width="58" height="58" rx="9" fill="#262626" /><path d="M13 14L22 19L13 24" fill="none" stroke="#fff" stroke-width="2.400" /><path d="M25 27.500H36" stroke="#fff" stroke-width="2.600" /></svg></button>
        <button aria-label="Просмотр"><svg viewBox="0 0 74 74"><rect width="74" height="74" rx="17" fill="#f0efee" /><rect x="6" y="6" width="62" height="62" rx="10" fill="url(#photo)" /><path d="M6 40H68V58H6Z" fill="#25406e" /><path d="M6 50L24 53L40 58V68H16Q6 68 6 58Z" fill="#dfe6ee" /><path d="M7 63Q18 58 28 67L16 68Q10 68 7 63Z" fill="#8c7050" /><path d="M40 50H70L77 73Q77 78 70 78H39Q32 78 32 73Z" fill="#c3c7c9" /><path d="M42 52H68L72 72H37Z" fill="#e9ecee" /><path d="M46 57L56 54L60 62L50 66ZM44 66L52 64L54 71L44 72ZM58 64L66 66L66 71H58Z" fill="#808692" /><path d="M38 40Q38 36 55 36T71 40V50Q71 53 55 53T38 50Z" fill="#111" /><ellipse cx="55" cy="40" rx="16" ry="3.500" fill="#333" /></svg></button>
        <button class="open" aria-label="Java"><svg viewBox="0 0 74 74"><rect x="1" y="-1" width="72" height="75" fill="#f7f7f7" stroke="#7f9cba" stroke-width="1.400" /><path d="M43 7Q46 15 37 22T38 39Q26 31 33 24T43 7Z" fill="#e89a34" /><path d="M49 18Q36 24 41 32Q44 36 40 40Q48 33 44 29Q42 24 49 18Z" fill="#e89a34" /><g fill="none" stroke="#5c82a6" stroke-width="2.600" stroke-linecap="round"><path d="M26 40Q14 44 30 45T51 42" /><path d="M53 39Q61 41 53 48" /><path d="M26 48Q34 52 46 48" /><path d="M27 55Q34 59 45 55" /><path d="M22 59Q8 64 30 65T54 61" /><path d="M24 69Q44 70 56 66" stroke-width="1.800" /></g></svg></button>
      </div>
      <span class="rule"></span>
      <div class="apps kept">
        <button class="mini-window" aria-label="Окно Finder"><svg viewBox="0 0 88 74"><rect x="1" y="17" width="86" height="41" rx="1" fill="#fdfdfd" /><path d="M1 17H17V58H1Z" fill="#dedcdc" /><path d="M4 19.500H5.500" stroke="#e8584c" stroke-width="2" /><path d="M6 19.500H7.500" stroke="#ecb43c" stroke-width="2" /><path d="M8 19.500H9.500" stroke="#58b84c" stroke-width="2" /><path d="M5 24H10M5 28H13M5 31H12M5 34H13M5 37H12M5 40H10M5 47H13" stroke="#9a9a9e" stroke-width="1.200" /><path d="M3 52H5M3 55H5" stroke="#e05a50" stroke-width="1.500" /><path d="M20 19.500H22M26 19.500H29M56 19.500H60M64 19.500H68M76 19.500H80M84 19.500H85" stroke="#b0b0b0" /><circle cx="23" cy="27" r="2.200" fill="#777" /><path d="M20.500 31H25.500" stroke="#aaa" /><svg x="58" y="50" width="28" height="28" viewBox="0 0 74 74">{@render finderFace()}</svg></svg></button>
        <button class="trash" aria-label="Корзина"><svg viewBox="0 0 66 86"><path d="M1 12L9 78Q10 85 33 85T56 78L65 12Z" fill="url(#bin)" /><path d="M12 70Q33 78 54 70L55 76Q50 82 33 82T11 76Z" fill="#f2f2f2" fill-opacity=".6" /><path d="M22 24Q34 34 46 26L44 31Q34 40 24 30Z" fill="#f4f4f4" fill-opacity=".6" /><ellipse cx="33" cy="12" rx="32" ry="8" fill="#9e9e9e" stroke="#dadada" stroke-width="1.500" /><path d="M5 13L12 5L18 6L24 0L32 6L40 1L46 7L56 5L61 13L48 19L30 20L14 18Z" fill="#e6e6e4" /><path d="M22 10L30 8L33 12L26 15Z" fill="#4ccbd0" /><path d="M36 8L42 4L46 13L38 17Z" fill="#4c4c54" /><path d="M42 14L48 9L52 14L46 18Z" fill="#c86c48" /><path d="M10 9L18 12L14 17L8 14ZM20 3L24 7L20 8ZM27 16L34 17L29 19ZM50 8L57 9L54 15ZM33 7L38 8L35 13Z" fill="#5c5c5e" /></svg></button>
      </div>
    </nav>
  </footer>
</div>

<style>
  :global(body) { margin: 0; background: #3a302f; }
  button { font: inherit; color: inherit; background: none; border: 0; padding: 0; margin: 0; }
  svg { display: block; flex: none; }
  .defs { position: absolute; width: 0; height: 0; }
  .screen { min-height: 100vh; display: flex; flex-direction: column; font-family: Inter, "Liberation Sans", sans-serif; background: linear-gradient(90deg, #3b2c38, #2c2838 40%, #16131c 70%, #3c3a4a); }
  .menubar { height: 72px; display: flex; justify-content: space-between; align-items: center; box-sizing: border-box; padding: 0 32px 2px 42px; margin-bottom: 2px; background: linear-gradient(90deg, #331f1e, #2a1c22 32%, #1e161c 70%, #191417); color: #fff; font-size: 26px; font-weight: 500; line-height: 32px; }
  .menus { display: flex; align-items: center; gap: 40px; }
  .app { font-weight: 700; }
  .status { display: flex; align-items: center; gap: 39px; color: #e8e6e7; }
  .lang { width: 44px; height: 32px; border-radius: 6px; background: #e8e6e7; color: #1d171c; font-size: 22px; font-weight: 600; line-height: 32px; }
  .clock { display: flex; gap: 16px; font-size: 27px; }

  .window { flex: 1; display: flex; flex-direction: column; border-radius: 20px; overflow: hidden; background: #eee; }
  .titlebar { height: 58px; box-sizing: border-box; display: flex; align-items: center; justify-content: space-between; padding: 0 16px 2px; background: #e8e8e8; border-top: 2px solid #f5f5f5; border-bottom: 2px solid #cbcbcb; }
  .lights, .lights-space { display: flex; gap: 16px; width: 104px; }
  .lights button { width: 24px; height: 24px; box-sizing: border-box; border-radius: 50%; background: #cfcfcf; border: 1px solid #b6b6b6; }
  h1 { margin: 0; font-size: 26px; line-height: 32px; font-weight: 700; color: #a9a9a9; }

  .toolbar { height: 54px; display: flex; align-items: flex-start; gap: 4px; padding-left: 2px; }
  .tool { width: 52px; height: 52px; box-sizing: border-box; display: grid; place-items: center; }
  .on { border: 4px solid #000; }
  .serif { font: italic bold 18px "Liberation Serif", serif; fill: #111; }
  .sep { width: 4px; height: 40px; margin: 6px 0 0 8px; background: #858585; }
  .sep.small { height: 28px; margin: 0 0 6px 8px; }

  .body { flex: 1; display: flex; }
  .side { width: 736px; flex: none; display: flex; flex-direction: column; font-family: "Noto Sans", sans-serif; font-size: 24px; color: #000; }
  .tools { height: 42px; box-sizing: border-box; display: flex; align-items: flex-end; gap: 4px; padding-left: 2px; }
  .actions { height: 46px; padding-bottom: 2px; }
  .mini { width: 36px; height: 40px; box-sizing: border-box; display: grid; place-items: center; }
  .tree { flex: 702; box-sizing: border-box; margin: 0 0 2px; padding: 2px 0 0; list-style: none; background: #fff; border: 2px solid #ccc; border-top-color: #b0b0b0; }
  .node { display: flex; align-items: center; height: 38px; line-height: 32px; }
  .root { padding-left: 2px; gap: 8px; }
  .circuit { padding-left: 49px; gap: 7px; }
  .library { padding-left: 13px; gap: 9px; }
  .library svg:first-child { margin-right: 8px; }
  .properties { flex: 740; box-sizing: border-box; background: #fff; border: 2px solid #999; border-top-color: #666; }
  .zoombar { height: 54px; box-sizing: border-box; border-top: 2px solid #fafafa; display: flex; align-items: center; padding: 0 4px 0 6px; }
  .zoombar input { flex: 1; min-width: 0; height: 38px; box-sizing: border-box; border: 0; border-bottom: 2px solid #ccc; border-radius: 0; padding: 0 5px; background: #fff; font: 26px "Noto Sans", sans-serif; color: #000; }
  .spinner { width: 26px; height: 40px; margin: 0 4px 0 8px; display: flex; flex-direction: column; border-radius: 12px; background: #fff; box-shadow: 0 1px 3px #999; }
  .spinner button { flex: 1; display: grid; place-items: center; }
  .spinner button + button { border-top: 2px solid #ccc; }
  .grip { width: 24px; height: 24px; background: conic-gradient(from 270deg at 2px 2px, #111 90deg, transparent 0) 1px 1px / 6px 6px; }
  .canvas { flex: 1; min-width: 0; margin-bottom: 2px; box-sizing: border-box; border: 2px solid #999; border-top-color: #666; background: conic-gradient(from 270deg at 2px 2px, #777 90deg, transparent 0) 2px 2px / 20px 20px #fff; }
  .label { font: 24px "Noto Sans", sans-serif; }
  .bit { font: 28px "Noto Sans", sans-serif; fill: #fff; text-anchor: middle; }

  .desk { height: 138px; box-sizing: border-box; padding: 6px 82px 10px; background: linear-gradient(90deg, #7e6570, #78606a 20px, #5a3f3a 28px, #58382f 70px, #4c3c36 400px, #3c3230 700px, #3e3236 780px, #7a6660 785px, #54465a 830px, #54465a 880px, #8c745f 884px, #8c745f 925px, #54485c 930px, #54485c 1050px, #90765f 1056px, #90765f 1085px, #6e4440 1092px, #5a4048 1130px, #3a3438 1136px, #3a3438 1200px, #8e7864 1206px, #8e7864 1410px, #4a4450 1418px, #4a4450 1530px, #927a64 1536px, #927a64 1615px, #4a4544 1620px, #937b66 1636px, #937b66 1720px, #3c3a3c 1728px, #3c3a3c 1860px, #865f58 1868px, #545062 1900px, #5c5060 2080px, #38342f 2160px, #3f342e 2400px, #2b2928 2800px, #242324 2900px, #4c4a5a 2925px); }
  .dock { height: 122px; box-sizing: border-box; position: relative; display: flex; align-items: flex-start; padding: 17px 19px 0 17px; border: 2px solid rgba(255, 255, 255, .18); border-radius: 38px; box-shadow: 0 0 64px rgba(0, 0, 0, .32); background: linear-gradient(90deg, #9c7b6f, #997c74 12%, #99857a 16%, #8d7c7d 23%, #b1968a 31%, #a49185 37%, #b5a193 43%, #9c929c 50%, #ac9b91 57%, #9c918c 62%, #b09a90 69%, #8b8684 76%, #8a7e79 81%, #7c7977 87%, #737170) border-box; }
  .apps { display: flex; gap: 25px; }
  .grow { flex: 1; justify-content: space-between; gap: 0; }
  .apps button { position: relative; width: 74px; height: 74px; filter: drop-shadow(0 1px 2px rgba(0, 0, 0, .35)); }
  .apps button > svg { width: 100%; height: 100%; overflow: visible; }
  .open::after { content: ""; position: absolute; left: 33px; top: 91px; width: 8px; height: 8px; border-radius: 50%; background: #170403; }
  .rule { width: 2px; height: 90px; margin: -3px 33px 0 35px; background: #4e4b4a; }
  .rule + .kept { margin-left: -6px; }
  .kept { gap: 22px; }
  .apps .mini-window { width: 88px; }
  .apps .trash { width: 66px; height: 86px; margin-top: -7px; }
  .petal { mix-blend-mode: multiply; opacity: .9; }
  .badge { position: absolute; right: -11px; top: -12px; width: 34px; height: 34px; border-radius: 50%; background: #ea5545; color: #fff; font-size: 20px; line-height: 34px; text-align: center; }
  .jb { font: 700 25px Inter, sans-serif; fill: #fff; }
  .month { font: 600 14px Inter, sans-serif; fill: #fff; text-anchor: middle; }
  .day { font: 300 42px Inter, sans-serif; fill: #222; text-anchor: middle; }
  .word { font: 700 20px Inter, sans-serif; fill: #fff; text-anchor: middle; }
  .two { font: 800 25px "Liberation Serif", serif; fill: #fff; text-anchor: middle; }
</style>
